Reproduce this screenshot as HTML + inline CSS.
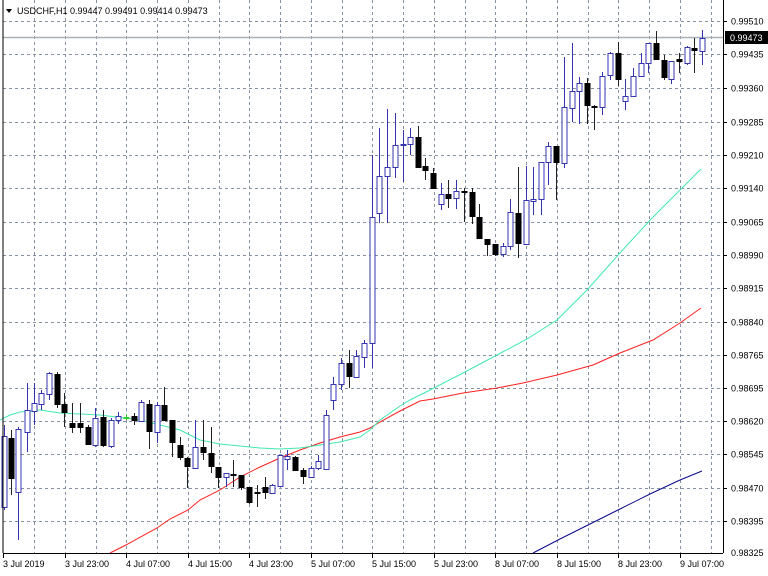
<!DOCTYPE html>
<html><head><meta charset="utf-8"><style>
html,body{margin:0;padding:0;background:#fff;}
body{width:768px;height:576px;overflow:hidden;position:relative;font-family:"Liberation Sans",sans-serif;}
svg{position:absolute;left:0;top:0;}
</style></head><body>
<svg id="c" width="768" height="576" xmlns="http://www.w3.org/2000/svg" font-family="Liberation Sans, sans-serif" font-size="9">
<rect x="0" y="0" width="768" height="576" fill="#fff"/>
<g id="grid" stroke="#8592a4" stroke-width="1" stroke-dasharray="3,3" shape-rendering="crispEdges"></g>
<line x1="3" y1="37.5" x2="723" y2="37.5" stroke="#a8b0b8" stroke-width="1.5"/>
<g id="ma" fill="none" stroke-width="1">
<polyline stroke="#0b0b8a" points="533,553 560,539 590,524 620,509 650,494 680,480 702,471"/>
<polyline stroke="#ff2020" points="110,553 126,545 157,528 170,519 188,510 200,500 220,490 240,477 260,467 280,458 300,450 320,443 340,437 360,432 370,428 380,422 400,411 420,401 433,399 463,393 497,388 523,383 557,375 593,365 620,353 653,340 680,323 701,308"/>
<polyline stroke="#40e8b0" points="0,420 10,415 20,412 40,410 60,413 100,415 140,420 180,430 200,440 220,444 240,446 260,448 280,449 300,448 320,445 340,442 360,437 370,430 380,420 400,406 410,400 430,390 463,373 497,355 527,339 557,320 587,290 620,253 653,217 701,169"/>
</g>
<g id="candles"></g>
<line x1="3" y1="0" x2="3" y2="553" stroke="#000" shape-rendering="crispEdges"/>
<line x1="3" y1="553.5" x2="723" y2="553.5" stroke="#000" shape-rendering="crispEdges"/>
<line x1="723.5" y1="0" x2="723.5" y2="553" stroke="#000" shape-rendering="crispEdges"/>
<g id="axis" fill="#000"></g>
<rect x="725" y="31" width="43" height="13" fill="#000"/>
<text x="730" y="41" fill="#fff">0.99473</text>
<path d="M6 9 L12 9 L9 13 Z" fill="#000"/>
<text x="17" y="14" fill="#000">USDCHF,H1  0.99447 0.99491 0.99414 0.99473</text>
</svg>
<script>
var NS="http://www.w3.org/2000/svg";
function el(p,n,a,t){var e=document.createElementNS(NS,n);for(var k in a)e.setAttribute(k,a[k]);if(t)e.textContent=t;p.appendChild(e);return e;}
var g=document.getElementById('grid');
var hy=[21,54,88,122,155,188,222,255,288,322,355,388,421,454,488,521];
hy.forEach(function(y){el(g,'line',{x1:3,y1:y+.5,x2:723,y2:y+.5});});
for(var k=1;k<=23;k++){var x=Math.round(3.25+30.75*k)+.5;if(x<723)el(g,'line',{x1:x,y1:0,x2:x,y2:553});}
var ax=document.getElementById('axis');
var pl=["0.99510","0.99435","0.99360","0.99285","0.99210","0.99140","0.99065","0.98990","0.98915","0.98840","0.98765","0.98695","0.98620","0.98545","0.98470","0.98395"];
pl.forEach(function(t,i){el(ax,'text',{x:731,y:hy[i]+3.5},t);el(ax,'line',{x1:723,y1:hy[i]+.5,x2:727,y2:hy[i]+.5,stroke:'#000'});});
el(ax,'text',{x:731,y:556},"0.98325");
var tl=["3 Jul 2019","3 Jul 23:00","4 Jul 07:00","4 Jul 15:00","4 Jul 23:00","5 Jul 07:00","5 Jul 15:00","5 Jul 23:00","8 Jul 07:00","8 Jul 15:00","8 Jul 23:00","9 Jul 07:00"];
tl.forEach(function(t,i){var x=Math.round(3.25+61.5*i);el(ax,'line',{x1:x+.5,y1:553,x2:x+.5,y2:558,stroke:'#000'});el(ax,'text',{x:x,y:567},t);});
var D=[[4,425,436,507,510,'u'],[11,430,438,479,495,'d'],[18,427,429,492,540,'u'],[27,383,410,432,452,'u'],[34,383,403,411,425,'u'],[41,390,393,404,410,'u'],[49,372,373,394,400,'u'],[57,372,374,405,408,'d'],[64,393,404,413,427,'d'],[72,403,423,428,433,'d'],[80,403,423,428,433,'d'],[88,425,427,445,445,'d'],[95,408,418,445,447,'u'],[103,410,417,446,447,'d'],[111,418,420,446,448,'u'],[118,412,416,420,424,'u'],[126,414,417,418,420,'g'],[134,413,416,421,425,'d'],[141,400,402,421,422,'u'],[149,400,404,432,449,'d'],[157,402,405,432,443,'u'],[164,387,405,421,421,'d'],[172,420,420,443,457,'d'],[180,437,445,458,460,'d'],[187,457,458,467,488,'d'],[195,420,447,468,468,'u'],[203,420,447,453,460,'d'],[211,427,453,467,473,'d'],[218,467,467,478,488,'d'],[226,473,473,477,487,'u'],[233,460,474,475,487,'d'],[241,475,475,488,490,'d'],[249,487,487,503,504,'d'],[257,485,492,494,507,'d'],[265,477,487,493,499,'d'],[272,484,485,493,493,'u'],[280,455,455,486,487,'u'],[287,450,456,459,470,'u'],[295,456,457,471,471,'d'],[303,468,470,477,484,'d'],[311,466,468,477,477,'u'],[318,455,461,468,470,'u'],[326,410,415,469,470,'u'],[333,377,384,400,410,'u'],[341,358,363,384,390,'u'],[349,350,363,377,388,'d'],[356,350,356,377,378,'u'],[364,340,343,357,368,'u'],[372,155,217,343,368,'u'],[379,128,176,213,223,'u'],[387,109,167,176,223,'u'],[395,113,145,167,178,'u'],[403,130,144,145,182,'u'],[410,128,137,144,155,'u'],[418,126,137,168,168,'d'],[425,158,166,171,180,'d'],[433,168,173,189,189,'d'],[441,183,194,204,210,'u'],[448,180,194,199,208,'d'],[456,180,191,198,209,'u'],[464,188,191,192,222,'d'],[472,188,192,217,224,'d'],[479,204,217,239,239,'d'],[487,239,239,245,256,'d'],[495,244,244,255,256,'d'],[503,243,246,254,257,'u'],[510,199,212,246,250,'u'],[518,167,213,244,258,'d'],[526,166,200,244,244,'u'],[533,167,199,201,215,'u'],[541,162,162,199,215,'u'],[548,142,146,162,185,'u'],[556,146,146,163,200,'d'],[564,57,107,163,168,'u'],[572,43,91,108,122,'u'],[579,77,83,91,124,'u'],[587,78,83,106,124,'d'],[594,105,106,107,130,'d'],[602,72,76,107,115,'u'],[610,52,53,75,80,'u'],[618,42,53,80,86,'d'],[625,79,96,101,110,'u'],[633,68,76,96,97,'u'],[641,53,63,76,77,'u'],[648,43,43,63,73,'u'],[656,31,43,60,60,'d'],[664,55,60,78,80,'d'],[671,61,61,79,84,'u'],[679,53,59,62,73,'d'],[687,46,47,63,65,'u'],[694,38,48,51,73,'d'],[702,30,38,51,65,'u']];
var cg=document.getElementById('candles');
D.forEach(function(c){var x=c[0]+.5,t=c[5];
 var col=t=='u'?'#3535b0':(t=='g'?'#30d030':'#000');
 el(cg,'line',{x1:x,y1:c[1],x2:x,y2:c[4],stroke:t=='d'?'#222':col,'stroke-width':1});
 var h=Math.max(1,c[3]-c[2]);
 if(t=='u')el(cg,'rect',{x:x-2.5,y:c[2]+.5,width:5,height:h,fill:'#fff',stroke:col,'stroke-width':1});
 else el(cg,'rect',{x:x-3,y:c[2],width:6,height:Math.max(2,h),fill:col});
});
</script>
</body></html>
